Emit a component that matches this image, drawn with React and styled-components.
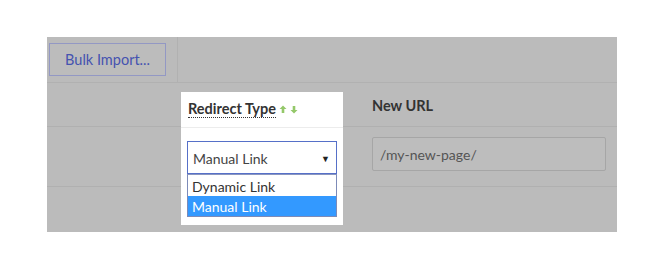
import React from "react";
import styled, { createGlobalStyle } from "styled-components";

const GlobalStyle = createGlobalStyle`
  html, body {
    margin: 0;
    padding: 0;
    background: #ffffff;
    font-family: Lato, "Open Sans", sans-serif;
  }
`;

const Page = styled.div`
  width: 665px;
  height: 270px;
  padding: 37px 0 0 47px;
  box-sizing: border-box;
`;

const Panel = styled.div`
  position: relative;
  width: 570px;
  height: 195px;
  background: #bbbbbb;
`;

const Toolbar = styled.div`
  display: flex;
  height: 46px;
  border-bottom: 1px solid #b1b1b1;
  box-sizing: border-box;
`;

const ToolCell = styled.div`
  width: 131px;
  padding: 6px 0 0 2px;
  box-sizing: border-box;
  border-right: 1px solid #b1b1b1;
`;

const BulkButton = styled.button`
  width: 117px;
  height: 33px;
  background: #bcbcbc;
  border: 1px solid #9398c4;
  color: #4553b0;
  font-family: Lato, "Open Sans", sans-serif;
  font-size: 14.5px;
  padding: 0;
`;

const Row = styled.div`
  display: grid;
  grid-template-columns: 134px 162px 1fr;
  height: ${p => p.h}px;
  border-bottom: ${p => (p.last ? "none" : "1px solid #b0b0b0")};
  box-sizing: border-box;
  align-items: ${p => p.align || "center"};
`;

const Cell = styled.div`
  padding-left: ${p => p.pl || 0}px;
  padding-top: ${p => p.pt || 0}px;
`;

const HeadLabel = styled.span`
  font-weight: 700;
  font-size: 14.5px;
  color: #333;
`;

const UrlInput = styled.div`
  width: 234px;
  height: 34px;
  box-sizing: border-box;
  border: 1px solid #a6a6a6;
  border-radius: 2px;
  background: #bdbdbd;
  color: #555;
  font-size: 14px;
  display: flex;
  align-items: center;
  padding-left: 7px;
`;

const Spotlight = styled.div`
  position: absolute;
  left: 134px;
  top: 55px;
  width: 162px;
  height: 133px;
  background: #fff;
  box-sizing: border-box;
`;

const SpotHead = styled.div`
  height: 36px;
  border-bottom: 1px solid #ececec;
  box-sizing: border-box;
  display: flex;
  align-items: center;
  padding: 0 0 1px 7px;
  gap: 3px;
`;

const SortLabel = styled.span`
  font-weight: 700;
  font-size: 14.5px;
  color: #333;
  border-bottom: 1px dotted #333;
  line-height: 17px;
`;

const SpotBody = styled.div`
  padding: 13px 0 0 6px;
`;

const Select = styled.div`
  width: 150px;
  height: 33px;
  box-sizing: border-box;
  border: 1px solid #5670c8;
  display: flex;
  align-items: center;
  justify-content: space-between;
  padding: 1px 6px 0 5px;
  font-size: 14px;
  color: #444;
`;

const Caret = styled.span`
  font-size: 9px;
  color: #222;
`;

const Options = styled.div`
  width: 150px;
  box-sizing: border-box;
  border: 1px solid #7d8bb8;
  border-top: 1px solid #8a96c0;
  padding-top: 1px;
`;

const Option = styled.div`
  height: 20px;
  line-height: 21px;
  padding-left: 4px;
  font-size: 14px;
  color: ${p => (p.active ? "#fff" : "#333")};
  background: ${p => (p.active ? "#3399ff" : "#fff")};
`;

const SortArrows = () => (
  <svg width="22" height="9" viewBox="0 0 22 9">
    <path d="M4 0.5 L7.5 4 L5.3 4 L5.3 8 L2.7 8 L2.7 4 L0.5 4 Z" fill="#94c86a" />
    <path d="M15 8.5 L18.5 5 L16.3 5 L16.3 1 L13.7 1 L13.7 5 L11.5 5 Z" fill="#94c86a" />
  </svg>
);

export default function App() {
  return (
    <>
      <GlobalStyle />
      <Page>
        <Panel>
          <Toolbar>
            <ToolCell>
              <BulkButton>Bulk Import...</BulkButton>
            </ToolCell>
          </Toolbar>
          <Row h={44}>
            <Cell />
            <Cell />
            <Cell pl={29}>
              <HeadLabel>New URL</HeadLabel>
            </Cell>
          </Row>
          <Row h={60} align="start">
            <Cell />
            <Cell />
            <Cell pl={29} pt={10}>
              <UrlInput>/my-new-page/</UrlInput>
            </Cell>
          </Row>
          <Spotlight>
            <SpotHead>
              <SortLabel>Redirect Type</SortLabel>
              <SortArrows />
            </SpotHead>
            <SpotBody>
              <Select>
                Manual Link
                <Caret>▼</Caret>
              </Select>
              <Options>
                <Option>Dynamic Link</Option>
                <Option active>Manual Link</Option>
              </Options>
            </SpotBody>
          </Spotlight>
        </Panel>
      </Page>
    </>
  );
}
